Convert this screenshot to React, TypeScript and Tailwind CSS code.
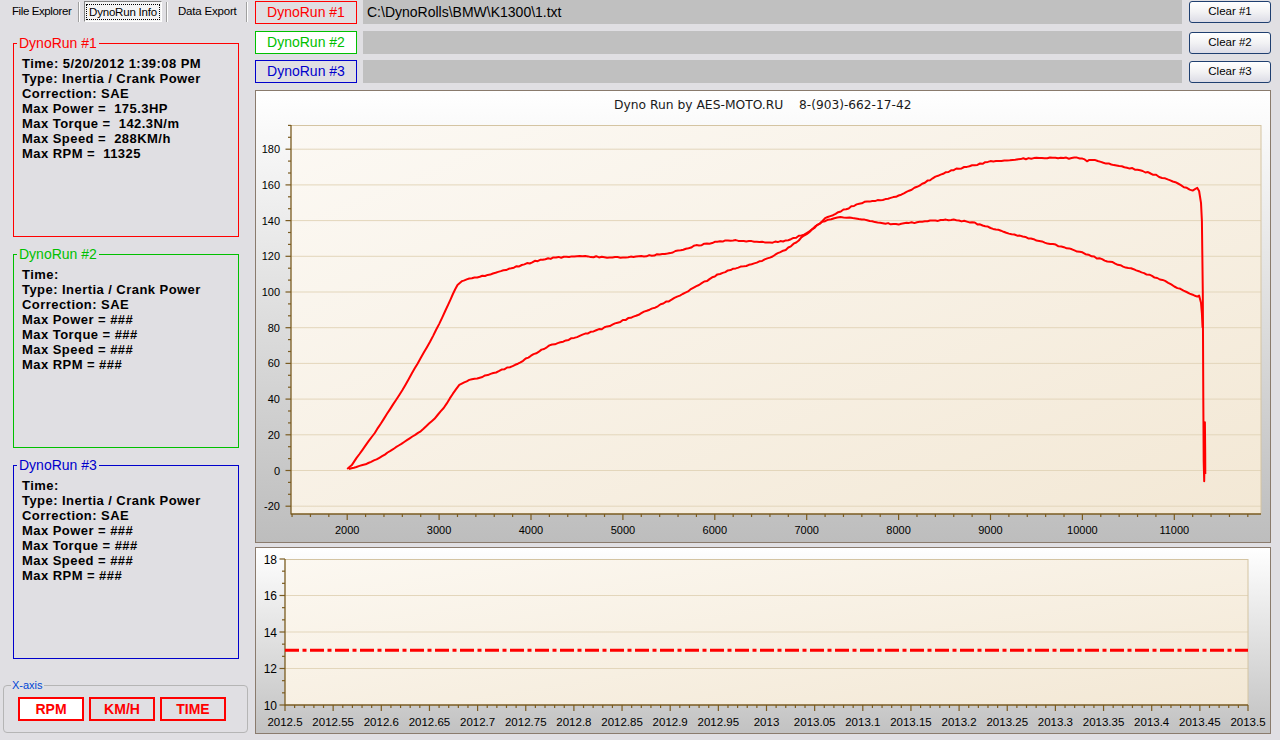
import React from "react";

const RUNS = [
  {
    name: "DynoRun #1",
    color: "border-[#ff0000]",
    text: "text-[#ff0000]",
    lines: [
      "Time: 5/20/2012 1:39:08 PM",
      "Type: Inertia / Crank Power",
      "Correction: SAE",
      "Max Power =  175.3HP",
      "Max Torque =  142.3N/m",
      "Max Speed =  288KM/h",
      "Max RPM =  11325",
    ],
  },
  {
    name: "DynoRun #2",
    color: "border-[#00c000]",
    text: "text-[#00c000]",
    lines: [
      "Time:",
      "Type: Inertia / Crank Power",
      "Correction: SAE",
      "Max Power = ###",
      "Max Torque = ###",
      "Max Speed = ###",
      "Max RPM = ###",
    ],
  },
  {
    name: "DynoRun #3",
    color: "border-[#0000cc]",
    text: "text-[#0000cc]",
    lines: [
      "Time:",
      "Type: Inertia / Crank Power",
      "Correction: SAE",
      "Max Power = ###",
      "Max Torque = ###",
      "Max Speed = ###",
      "Max RPM = ###",
    ],
  },
];

// torque-like curve (steep start)
const TORQUE = [
  [2000, 1], [2050, 3], [2100, 7], [2200, 14], [2300, 21], [2400, 29], [2500, 37],
  [2600, 45], [2700, 54], [2800, 63], [2900, 72], [3000, 82], [3100, 93], [3150, 99],
  [3200, 104], [3250, 106], [3300, 107], [3500, 109], [3700, 112], [3900, 115],
  [4100, 118], [4300, 119.5], [4500, 120], [4800, 119.6], [5000, 119.5], [5200, 120],
  [5400, 121], [5600, 123], [5800, 126], [6000, 128], [6200, 129], [6400, 128.5],
  [6600, 127.5], [6800, 129], [7000, 133], [7100, 137], [7200, 140], [7300, 141.5],
  [7400, 142], [7500, 141.5], [7600, 140.5], [7800, 138.5], [8000, 138], [8200, 139],
  [8400, 140], [8600, 140.5], [8800, 139], [9000, 136], [9200, 133], [9500, 129],
  [9800, 125], [10000, 122], [10100, 120], [10300, 117], [10500, 113.5], [10700, 110],
  [10900, 106], [11000, 103], [11100, 101], [11200, 98.5], [11250, 97.5], [11270, 98],
];
const TORQUE_TAIL = [[11290, 94], [11300, 88], [11308, 80]];

const POWER = [
  [2020, 0.8], [2100, 2], [2200, 3.5], [2350, 7], [2500, 12], [2650, 17], [2800, 22],
  [2950, 29], [3050, 35], [3150, 43], [3220, 48], [3300, 50], [3500, 53], [3800, 58.5],
  [4000, 64], [4200, 70], [4500, 75], [4800, 80], [5000, 84], [5200, 88], [5500, 95],
  [5800, 103], [6000, 109], [6200, 113], [6400, 115.5], [6600, 119], [6800, 124.6],
  [7000, 132.5], [7200, 141], [7400, 146], [7600, 150], [7800, 151.5], [8000, 154],
  [8200, 159], [8400, 164.5], [8600, 168.5], [8800, 171], [9000, 173], [9300, 174.5],
  [9500, 175], [10000, 175], [10050, 173.5], [10100, 174], [10200, 173], [10400, 170.5],
  [10600, 168.5], [10770, 166], [10900, 163.5], [11040, 160.7], [11200, 156.6],
  [11250, 158.3], [11270, 156.6],
];
const POWER_TAIL = [
  [11290, 150], [11300, 140], [11310, 100], [11316, 40], [11320, 5], [11325, -6],
  [11329, 5], [11333, 27], [11336, 10], [11337, -2],
];

const rpmX = (r: number) => 347.2 + (r - 2000) * 0.0919;
const valY = (v: number) => 470.5 - v * 1.785;

function buildPath(pts: number[][], tail: number[][], seed: number) {
  const out: string[] = [];
  for (let i = 0; i < pts.length - 1; i++) {
    const [r0, v0] = pts[i];
    const [r1, v1] = pts[i + 1];
    const n = Math.max(1, Math.round((r1 - r0) / 30));
    for (let k = 0; k < n; k++) {
      const r = r0 + ((r1 - r0) * k) / n;
      const v = v0 + ((v1 - v0) * k) / n;
      const s = Math.sin(r * 12.9898 + seed) * 43758.5453;
      const j = (s - Math.floor(s) - 0.5) * (r > 3300 ? 0.7 : 0.2);
      out.push(`${rpmX(r).toFixed(1)},${valY(v + j).toFixed(1)}`);
    }
  }
  const last = pts[pts.length - 1];
  out.push(`${rpmX(last[0]).toFixed(1)},${valY(last[1]).toFixed(1)}`);
  tail.forEach(([r, v]) => out.push(`${rpmX(r).toFixed(1)},${valY(v).toFixed(1)}`));
  return out.join(" ");
}

const AXIS = "#7a5b20";
const GRID = "#e3d6bb";
const EDGE = "#d4c4a2";

function TopChart() {
  const majorsY = [-20, 0, 20, 40, 60, 80, 100, 120, 140, 160, 180];
  const minorsY: number[] = [];
  for (let k = 0; k <= 32; k++) minorsY.push(-20 + (k * 20) / 3);
  const ticksX: number[] = [];
  for (let r = 1400; r <= 11800; r += 200) ticksX.push(r);

  return (
    <svg width="1014" height="451" viewBox="256 91 1014 451" className="block">
      <defs>
        <linearGradient id="plotA" x1="0" y1="0" x2="1" y2="1">
          <stop offset="0" stopColor="#fcf9f4" />
          <stop offset="1" stopColor="#f3e8d5" />
        </linearGradient>
      </defs>
      <text x="614" y="108.5" fontFamily="'DejaVu Sans', Verdana, sans-serif" fontSize="12.3" fill="#1a1a1a">
        Dyno Run by AES-MOTO.RU
      </text>
      <text x="799" y="108.5" fontFamily="'DejaVu Sans', Verdana, sans-serif" fontSize="12.2" fill="#1a1a1a">
        8-(903)-662-17-42
      </text>
      <rect x="291" y="125" width="970" height="389" fill="url(#plotA)" />
      {majorsY.map((v) => (
        <line key={"g" + v} x1="291" x2="1261" y1={valY(v)} y2={valY(v)} stroke={GRID} strokeWidth="1" />
      ))}
      <line x1="291" x2="1261" y1="125.5" y2="125.5" stroke={EDGE} />
      <line x1="1261" x2="1261" y1="125" y2="514" stroke={EDGE} />
      <line x1="291" x2="291" y1="125" y2="514.5" stroke={AXIS} strokeWidth="1.3" />
      <line x1="291" x2="1261" y1="514" y2="514" stroke={AXIS} strokeWidth="1.3" />
      {minorsY.map((v, i) => {
        const major = i % 3 === 0;
        return (
          <line key={"ty" + i} x1={major ? 285.5 : 288} x2="291" y1={valY(v)} y2={valY(v)} stroke={AXIS} strokeWidth="1.2" />
        );
      })}
      {ticksX.map((r) => {
        const major = r % 1000 === 0;
        return (
          <line key={"tx" + r} x1={rpmX(r)} x2={rpmX(r)} y1="514" y2={major ? 520 : 517} stroke={AXIS} strokeWidth="1.2" />
        );
      })}
      {majorsY.map((v) => (
        <text key={"ly" + v} x="280" y={valY(v) + 4} textAnchor="end" fontFamily="'Liberation Sans', Arial, sans-serif" fontSize="11" fill="#000">
          {v}
        </text>
      ))}
      {ticksX
        .filter((r) => r % 1000 === 0)
        .map((r) => (
          <text key={"lx" + r} x={rpmX(r)} y="534" textAnchor="middle" fontFamily="'Liberation Sans', Arial, sans-serif" fontSize="11" fill="#000">
            {r}
          </text>
        ))}
      <polyline points={buildPath(TORQUE, TORQUE_TAIL, 1.7)} fill="none" stroke="#ff0000" strokeWidth="2" strokeLinejoin="round" />
      <polyline points={buildPath(POWER, POWER_TAIL, 5.3)} fill="none" stroke="#ff0000" strokeWidth="2" strokeLinejoin="round" />
    </svg>
  );
}

function BottomChart() {
  const tX = (t: number) => 285 + t * 9.63;
  const vY = (v: number) => 705 - (v - 10) * 18.25;
  const minorsY: number[] = [];
  for (let k = 0; k <= 12; k++) minorsY.push(10 + (k * 2) / 3);
  const ticks: number[] = [];
  for (let k = 0; k <= 100; k++) ticks.push(k);

  return (
    <svg width="1014" height="185" viewBox="256 548 1014 185" className="block">
      <defs>
        <linearGradient id="plotB" x1="0" y1="0" x2="1" y2="1">
          <stop offset="0" stopColor="#fcf8f1" />
          <stop offset="1" stopColor="#f3e8d5" />
        </linearGradient>
      </defs>
      <rect x="285" y="559" width="963" height="146" fill="url(#plotB)" />
      {[12, 14, 16].map((v) => (
        <line key={v} x1="285" x2="1248" y1={vY(v)} y2={vY(v)} stroke={GRID} />
      ))}
      <line x1="285" x2="1248" y1="559.5" y2="559.5" stroke={EDGE} />
      <line x1="1248" x2="1248" y1="559" y2="705" stroke={EDGE} />
      <line x1="285" x2="285" y1="559" y2="705.5" stroke={AXIS} strokeWidth="1.3" />
      <line x1="285" x2="1248" y1="705" y2="705" stroke={AXIS} strokeWidth="1.3" />
      {minorsY.map((v, i) => (
        <line key={"my" + i} x1={i % 3 === 0 ? 279.5 : 282} x2="285" y1={vY(v)} y2={vY(v)} stroke={AXIS} strokeWidth="1.2" />
      ))}
      {ticks.map((k) => (
        <line key={"mx" + k} x1={tX(k)} x2={tX(k)} y1="705" y2={k % 5 === 0 ? 711 : 708} stroke={AXIS} strokeWidth="1.2" />
      ))}
      {[10, 12, 14, 16, 18].map((v) => (
        <text key={"ly" + v} x="277" y={vY(v) + 4.5} textAnchor="end" fontFamily="'Liberation Sans', Arial, sans-serif" fontSize="12" fill="#000">
          {v}
        </text>
      ))}
      {ticks
        .filter((k) => k % 5 === 0)
        .map((k) => (
          <text key={"lx" + k} x={tX(k)} y="725.5" textAnchor="middle" fontFamily="'Liberation Sans', Arial, sans-serif" fontSize="11.5" fill="#000">
            {String(parseFloat((2012.5 + k / 100).toFixed(2)))}
          </text>
        ))}
      <line x1="285" x2="1248" y1="650.3" y2="650.3" stroke="#ff0000" strokeWidth="3" strokeDasharray="14 3.5 4 3.5" />
    </svg>
  );
}

function Separator() {
  return <div className="w-[2px] h-[20px] border-l border-[#a0a0a0] border-r border-r-white" />;
}

function ClearButton({ label }: { label: string }) {
  return (
    <button className="ml-[7px] w-[82px] h-[22px] rounded-[3px] border border-[#1f3f70] bg-linear-to-b from-white via-[#f2f2f4] to-[#dcdce6] text-[11.5px] text-black flex items-center justify-center">
      {label}
    </button>
  );
}

export default function App() {
  return (
    <div className="w-[1280px] h-[740px] bg-[#e0dfe3] flex overflow-hidden font-['Liberation_Sans',Arial,sans-serif] text-black">
      {/* left panel */}
      <div className="w-[255px] shrink-0 flex flex-col">
        <div className="h-[24px] flex items-center text-[11.5px]">
          <div className="w-[78px] pl-[12px] tracking-[-0.4px]">File Explorer</div>
          <Separator />
          <div className="ml-[4px] w-[78px] h-[21px] self-start mt-[1px] border border-t-[#808080] border-l-[#808080] border-r-white border-b-white bg-[#f4f4f4] flex items-center justify-center">
            <span className="border border-dotted border-black px-[2px] leading-[14px] tracking-[-0.2px]">DynoRun Info</span>
          </div>
          <div className="ml-[4px]">
            <Separator />
          </div>
          <div className="w-[78px] pl-[10px] tracking-[-0.2px]">Data Export</div>
          <Separator />
        </div>

        {RUNS.map((run, i) => (
          <fieldset
            key={run.name}
            className={`ml-[13px] w-[226px] h-[202px] border ${run.color} ${i === 0 ? "mt-[11px]" : "mt-[9px]"}`}
          >
            <legend className={`ml-[3px] px-[2px] text-[14px] leading-[16px] ${run.text}`}>{run.name}</legend>
            <div className="pl-[8px] pt-[4.5px] text-[13px] font-bold leading-[15px] tracking-[0.45px]">
              {run.lines.map((l) => (
                <div key={l} className="whitespace-pre">
                  {l}
                </div>
              ))}
            </div>
          </fieldset>
        ))}

        <fieldset className="ml-[3px] mt-[19px] w-[245px] h-[55px] border border-[#b5b5b5] rounded-[4px]">
          <legend className="ml-[7px] px-[1px] text-[11px] leading-[14px] text-[#0046d5]">X-axis</legend>
          <div className="flex gap-[5px] pl-[14px] pt-[5px]">
            <button className="w-[66px] h-[24px] border-2 border-[#ff0000] bg-white text-[#ff0000] font-bold text-[14px]">RPM</button>
            <button className="w-[66px] h-[24px] border-2 border-[#ff0000] text-[#ff0000] font-bold text-[14px]">KM/H</button>
            <button className="w-[66px] h-[24px] border-2 border-[#ff0000] text-[#ff0000] font-bold text-[14px]">TIME</button>
          </div>
        </fieldset>
      </div>

      {/* right panel */}
      <div className="flex-1 flex flex-col">
        <div className="h-[24px] flex items-center">
          <div className="w-[102px] h-[23px] self-end border border-[#ff0000] text-[#ff0000] text-[14px] flex items-center justify-center">
            DynoRun #1
          </div>
          <div className="ml-[6px] w-[819px] h-[24px] bg-[#c0c0c0] text-[14px] pl-[4px] flex items-center">
            C:\DynoRolls\BMW\K1300\1.txt
          </div>
          <ClearButton label="Clear #1" />
        </div>
        <div className="mt-[7px] h-[23px] flex items-center">
          <div className="w-[102px] h-[23px] border border-[#00c000] bg-white text-[#00c000] text-[14px] flex items-center justify-center">
            DynoRun #2
          </div>
          <div className="ml-[6px] w-[819px] h-[23px] bg-[#c0c0c0]" />
          <ClearButton label="Clear #2" />
        </div>
        <div className="mt-[6px] h-[23px] flex items-center">
          <div className="w-[102px] h-[23px] border border-[#0000cc] text-[#0000cc] text-[14px] flex items-center justify-center">
            DynoRun #3
          </div>
          <div className="ml-[6px] w-[819px] h-[23px] bg-[#c0c0c0]" />
          <ClearButton label="Clear #3" />
        </div>

        <div className="mt-[7px] w-[1016px] h-[453px] border border-[#8a7b6d] bg-linear-to-b from-white to-[#bdbdbd]">
          <TopChart />
        </div>
        <div className="mt-[4px] w-[1016px] h-[187px] border border-[#8a7b6d] bg-linear-to-b from-white to-[#c2c2c2]">
          <BottomChart />
        </div>
      </div>
    </div>
  );
}
